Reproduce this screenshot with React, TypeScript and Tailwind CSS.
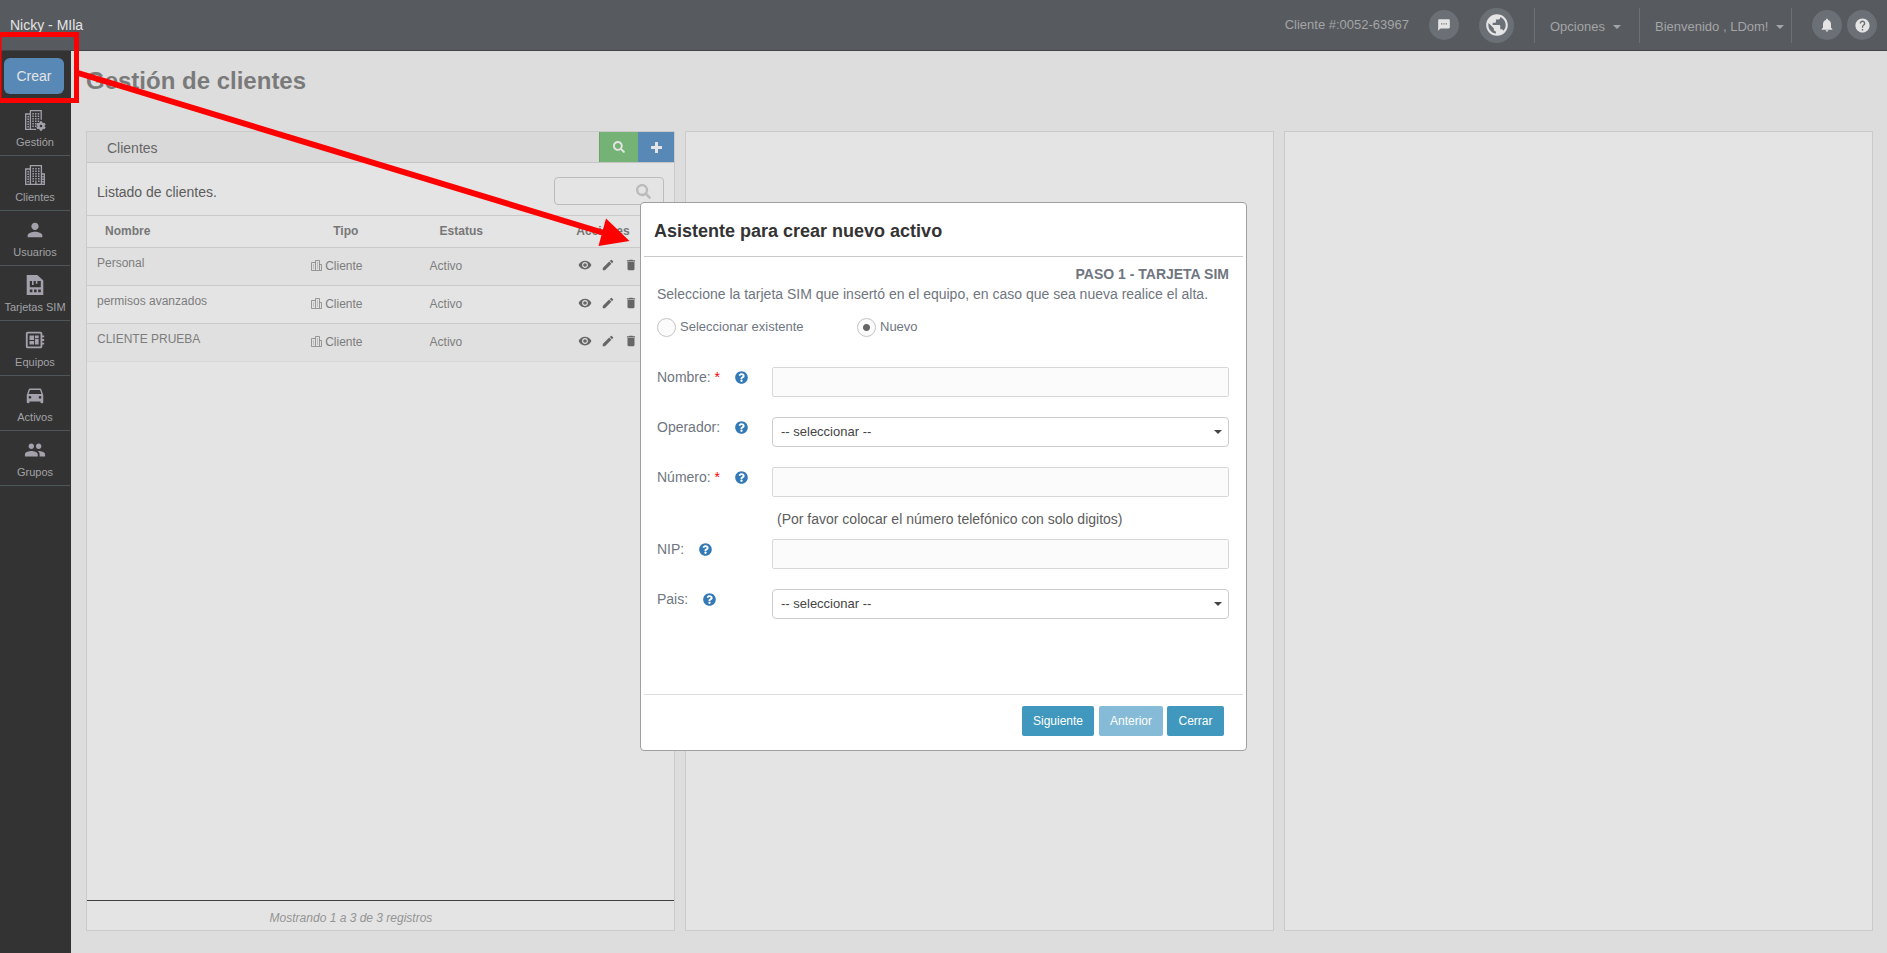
import React, { useState } from 'react';
import {
  MdDelete,
  MdDeveloperBoard,
  MdDirectionsCar,
  MdEdit,
  MdHelp,
  MdNotifications,
  MdPeople,
  MdPerson,
  MdPublic,
  MdSms,
  MdVisibility,
} from 'react-icons/md';
import { FaQuestionCircle, FaSearch } from 'react-icons/fa';

interface IconProps {
  className?: string;
}

const windows = (xs: number[], ys: number[]) =>
  ys.flatMap(y => xs.map(x => <rect key={`${x}-${y}`} x={x} y={y} width="1.5" height="1.5" fill="currentColor" />));

function GearBuildingsIcon({ className }: IconProps) {
  return (
    <svg viewBox="0 0 22 22" className={className} fill="none" stroke="currentColor" strokeWidth="1.3">
      <path d="M6 5H1.7v15.3h10.5M6.4 20V1.7h10.8v9" />
      <g stroke="none">
        {windows([8.3, 11, 13.7], [4, 6.5, 9, 11.5])}
        {windows([8.3, 11], [14, 16.5])}
        {windows([3.4], [7, 9.5, 12, 14.5, 17])}
      </g>
      <circle cx="17" cy="17" r="2.5" strokeWidth="2.4" />
      <path d="M17 12.3v2M17 19.7v2M12.9 14.7l1.7 1M19.4 18.3l1.7 1M12.9 19.3l1.7-1M19.4 15.7l1.7-1" strokeWidth="2.2" />
    </svg>
  );
}

function BuildingsIcon({ className }: IconProps) {
  return (
    <svg viewBox="0 0 22 22" className={className} fill="none" stroke="currentColor" strokeWidth="1.3">
      <path d="M6.4 5H1.7v15.3h18.6V10h-2.8M6.4 20V1.7h11V20M11.9 20v-3.5" />
      <g stroke="none">
        {windows([8.4, 11.2, 14], [4, 6.5, 9, 11.5, 14])}
        {windows([8.4, 14], [16.5])}
        {windows([3.4], [7, 9.5, 12, 14.5, 17])}
        {windows([18.2], [12, 14.5, 17])}
      </g>
    </svg>
  );
}

function SmallBuildingsIcon({ className }: IconProps) {
  return (
    <svg viewBox="0 0 11 11" className={className} fill="none" stroke="currentColor">
      <path d="M4.5 2.5h-4v8h10v-6h-2M4.5 10V.5h4V10" strokeOpacity="0.75" />
      <path d="M2.5 4v5M6.5 2v7" strokeOpacity="0.35" />
    </svg>
  );
}

function SimIcon({ className }: IconProps) {
  return (
    <svg viewBox="0 0 22 22" className={className} fill="currentColor" fillRule="evenodd">
      <path d="M2.7 1h10.6l6 5.6V21H2.7zM5.8 7h2.2v4h1.6V7h2.2v2.8h1.6V7h3.4v6.2H5.8zM5.8 15.4v2.8h2.6v-2.8zM10 15.4v2.8h2.6v-2.8zM14.2 15.4v2.8h2.6v-2.8z" />
    </svg>
  );
}

function PlusIcon({ className }: IconProps) {
  return (
    <svg viewBox="0 0 11 11" className={className} fill="currentColor">
      <path d="M4 .5A.5.5 0 0 1 4.5 0h2a.5.5 0 0 1 .5.5V4h3.5a.5.5 0 0 1 .5.5v2a.5.5 0 0 1-.5.5H7v3.5a.5.5 0 0 1-.5.5h-2a.5.5 0 0 1-.5-.5V7H.5a.5.5 0 0 1-.5-.5v-2A.5.5 0 0 1 .5 4H4z" />
    </svg>
  );
}

const menuItems = [
  { label: 'Gestión', icon: GearBuildingsIcon },
  { label: 'Clientes', icon: BuildingsIcon },
  { label: 'Usuarios', icon: MdPerson },
  { label: 'Tarjetas SIM', icon: SimIcon },
  { label: 'Equipos', icon: MdDeveloperBoard },
  { label: 'Activos', icon: MdDirectionsCar },
  { label: 'Grupos', icon: MdPeople },
];

const clients = ['Personal', 'permisos avanzados', 'CLIENTE PRUEBA'];

function Caret({ className = '' }: IconProps) {
  return (
    <svg viewBox="0 0 8 4" className={`h-1 w-2 ${className}`} fill="currentColor">
      <path d="M0 0h8L4 4z" />
    </svg>
  );
}

function TopBar() {
  return (
    <header className="flex h-[51px] items-center justify-between border-b border-[#414548] bg-[#575a5e] px-2.5 text-[#a3a5a7]">
      <span className="text-sm text-[#e4e4e4]">Nicky - MIla</span>
      <div className="flex items-center text-[13px]">
        <span className="mr-5">Cliente #:0052-63967</span>
        <button aria-label="Mensajes" className="mr-5 flex size-[30px] items-center justify-center rounded-full bg-[#6b7076] text-[#e4e4e4]">
          <MdSms className="size-3.5" />
        </button>
        <button aria-label="Idioma" className="mr-5 flex size-[35px] items-center justify-center rounded-full bg-[#6b7076] text-[#e4e4e4]">
          <MdPublic className="size-[26px]" />
        </button>
        <button className="flex h-[35px] w-[105px] items-center gap-2 border-l border-[#6e7174] pt-1 pl-[15px]">
          Opciones
          <Caret />
        </button>
        <button className="mr-5 flex h-[35px] w-[153px] items-center gap-2 border-x border-[#6e7174] pt-1 pl-[15px] whitespace-nowrap">
          Bienvenido , LDom!
          <Caret />
        </button>
        <button aria-label="Notificaciones" className="mr-[5px] flex size-[30px] items-center justify-center rounded-full bg-[#6b7076] text-[#e4e4e4]">
          <MdNotifications className="size-4" />
        </button>
        <button aria-label="Ayuda" className="flex size-[30px] items-center justify-center rounded-full bg-[#6b7076] text-[#e4e4e4]">
          <MdHelp className="size-[17px]" />
        </button>
      </div>
    </header>
  );
}

function Sidebar() {
  return (
    <nav className="w-[71px] shrink-0 bg-[#333333] pr-px">
      <div className="h-[50px] px-1 pt-[7px]">
        <button className="h-9 w-[60px] rounded-md bg-[#5889b6] text-sm text-[#e4e4e4]">Crear</button>
      </div>
      {menuItems.map(({ label, icon: Icon }) => (
        <a
          key={label}
          href="#"
          className="flex h-[55px] flex-col items-center gap-0.5 border-b border-[#4d5759] pt-2 text-[11px] leading-[18px] whitespace-nowrap text-[#a2a2a6]"
        >
          <Icon className="size-[22px] text-[#a4a1ad]" />
          {label}
        </a>
      ))}
    </nav>
  );
}

function ClientsPanel() {
  return (
    <section className="flex flex-1 flex-col border border-[#cacaca] bg-[#e4e4e4] text-[#7d7d7d]">
      <div className="flex h-[31px] items-stretch border-b border-[#c4c4c4] bg-[#d9d9d9]">
        <h2 className="flex-1 pl-5 text-sm leading-8 text-[#666666]">Clientes</h2>
        <button aria-label="Buscar" className="flex w-[39px] items-center justify-center border-l border-[#66a468] bg-[#74b375] text-[#e4e4e4]">
          <FaSearch className="size-3" />
        </button>
        <button aria-label="Agregar" className="flex w-9 items-center justify-center bg-[#5889b6] text-[#e4e4e4]">
          <PlusIcon className="size-[11px]" />
        </button>
      </div>
      <div className="flex h-[53px] items-center justify-between border-b border-[#cacaca] px-2.5">
        <label htmlFor="buscar" className="pt-1.5 text-sm text-[#5c5c5c]">Listado de clientes.</label>
        <div className="relative mt-1">
          <input id="buscar" className="block h-7 w-[110px] rounded border border-[#bcbcbc] pl-2 text-xs outline-none" />
          <FaSearch className="absolute top-[7px] right-[13px] size-[15px] text-[#bbbbbb]" />
        </div>
      </div>
      <table className="w-full table-fixed text-left text-xs">
        <thead>
          <tr className="h-[31px] border-b border-[#cacaca] text-[#777777]">
            <th className="w-[37%] pl-[18px]">Nombre</th>
            <th className="w-[20%] pl-[29px]">Tipo</th>
            <th className="w-[25%] pl-[18px]">Estatus</th>
            <th className="w-[18%] pl-2">Acciones</th>
          </tr>
        </thead>
        <tbody>
          {clients.map(name => (
            <tr key={name} className="h-[38px] border-b border-[#cacaca] odd:bg-[#e0e0e0] last:border-[#d8d8d8]">
              <td className="pb-1.5 pl-2.5">{name}</td>
              <td className="pb-px pl-[7px]">
                <span className="flex items-center gap-[3px]">
                  <SmallBuildingsIcon className="size-[11px]" />
                  Cliente
                </span>
              </td>
              <td className="pb-px pl-2">Activo</td>
              <td className="pb-0.5 pl-2.5">
                <span className="flex items-center gap-[9px] text-[#666666]">
                  <button aria-label="Ver"><MdVisibility className="size-3.5" /></button>
                  <button aria-label="Editar"><MdEdit className="size-3.5" /></button>
                  <button aria-label="Eliminar"><MdDelete className="size-3.5" /></button>
                </span>
              </td>
            </tr>
          ))}
        </tbody>
      </table>
      <footer className="mt-auto h-[30px] border-t border-[#3f3f3f] pt-[9px] pr-[59px] text-center text-xs text-[#949494] italic">
        Mostrando 1 a 3 de 3 registros
      </footer>
    </section>
  );
}

interface FieldProps {
  id: string;
  label: string;
  required?: boolean;
  select?: boolean;
}

function Field({ id, label, required, select }: FieldProps) {
  return (
    <div className="flex h-[30px]">
      <div className="flex w-[115px] shrink-0 items-center pb-2.5 text-sm text-[#6f7680]">
        <label htmlFor={id}>
          {label}
          {required && <span className="text-[#ff0000]"> *</span>}
        </label>
        <FaQuestionCircle className="ml-[15px] size-[13px] text-[#337ab7]" />
      </div>
      {select ? (
        <div className="relative flex-1">
          <select id={id} className="block h-[30px] w-full appearance-none rounded border border-[#cccccc] bg-white px-2 text-[13px] text-[#444444]">
            <option>-- seleccionar --</option>
          </select>
          <Caret className="pointer-events-none absolute top-[13px] right-[7px] text-[#444444]" />
        </div>
      ) : (
        <input id={id} className="block h-[30px] flex-1 rounded-xs border border-[#d8d8d8] bg-[#fbfbfb] px-2 text-[13px] outline-none" />
      )}
    </div>
  );
}

function AssetWizard() {
  const [mode, setMode] = useState('nuevo');

  const options = [
    { value: 'existente', label: 'Seleccionar existente' },
    { value: 'nuevo', label: 'Nuevo' },
  ];

  return (
    <div role="dialog" aria-label="Asistente" className="w-[607px] rounded border border-[#a0a0a0] bg-white px-[3px]">
      <h3 className="border-b border-[#c9c9c9] px-2.5 pt-3.5 pb-[11px] text-lg leading-7 font-bold text-[#333333]">
        Asistente para crear nuevo activo
      </h3>
      <div className="h-[437px] pt-[7px] pr-3.5 pl-[13px]">
        <p className="text-right text-sm leading-5 font-bold text-[#6f7680]">PASO 1 - TARJETA SIM</p>
        <p className="text-sm leading-5 text-[#6f7680]">
          Seleccione la tarjeta SIM que insertó en el equipo, en caso que sea nueva realice el alta.
        </p>
        <div className="mt-[13px] flex h-5 text-[13px] text-[#6f7680]">
          {options.map(option => (
            <label key={option.value} className="flex w-[200px] items-center gap-1">
              <input
                type="radio"
                name="modo"
                checked={mode === option.value}
                onChange={() => setMode(option.value)}
                className="size-[19px] appearance-none rounded-full border border-[#c4c4c4] bg-[#fbfbfb] checked:bg-[radial-gradient(circle,#666666_3px,#fbfbfb_4px)]"
              />
              {option.label}
            </label>
          ))}
        </div>
        <div className="mt-[30px] flex flex-col gap-5">
          <Field id="nombre" label="Nombre:" required />
          <Field id="operador" label="Operador:" select />
          <Field id="numero" label="Número:" required />
        </div>
        <p className="pt-3 pb-2.5 pl-[120px] text-sm leading-5 text-[#5c5c5c]">
          (Por favor colocar el número telefónico con solo digitos)
        </p>
        <div className="flex flex-col gap-5">
          <Field id="nip" label="NIP:" />
          <Field id="pais" label="Pais:" select />
        </div>
      </div>
      <div className="flex justify-end border-t border-[#dddddd] pt-[11px] pr-[19px] pb-3.5 text-xs text-white">
        <button className="h-[30px] w-[72px] rounded-xs bg-[#4098be]">Siguiente</button>
        <button disabled className="ml-[5px] h-[30px] w-16 rounded-xs bg-[#85bbd6]">Anterior</button>
        <button className="ml-1 h-[30px] w-[57px] rounded-xs bg-[#4098be]">Cerrar</button>
      </div>
    </div>
  );
}

export default function App() {
  return (
    <div className="relative flex min-h-screen flex-col bg-[#dddddd] font-['Liberation_Sans',Arial,sans-serif]">
      <TopBar />
      <div className="flex flex-1">
        <Sidebar />
        <main className="flex flex-1 flex-col pr-3.5 pb-[22px] pl-[15px]">
          <h1 className="h-20 pt-3.5 text-2xl font-bold text-[#7a7a7a]">Gestión de clientes</h1>
          <div className="flex flex-1 gap-2.5">
            <ClientsPanel />
            <section className="flex-1 border border-[#cacaca] bg-[#e4e4e4]" />
            <section className="flex-1 border border-[#cacaca] bg-[#e4e4e4]" />
          </div>
        </main>
      </div>

      <div className="absolute inset-0 flex items-center justify-center">
        <AssetWizard />
      </div>

      {/* Callout from the create button to the wizard */}
      <svg width="640" height="260" className="pointer-events-none absolute top-0 left-0">
        <rect x="-1" y="34.5" width="77.5" height="66" fill="none" stroke="#ff0000" strokeWidth="5" />
        <path d="M78 73L604 233" stroke="#ff0000" strokeWidth="6" />
        <path d="M606 218.5L629.5 241L598.5 246z" fill="#ff0000" />
      </svg>
    </div>
  );
}
